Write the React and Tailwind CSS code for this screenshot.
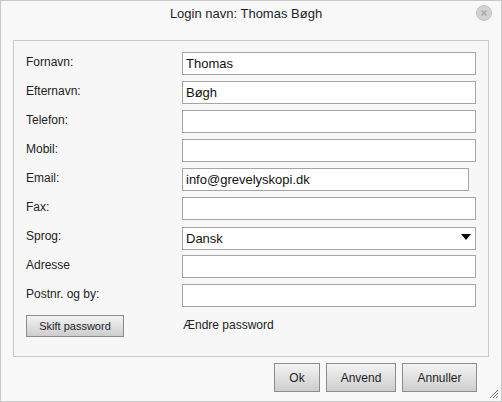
import { useState } from 'react';

const FIELDS = [
  { label: 'Fornavn:', value: 'Thomas' },
  { label: 'Efternavn:', value: 'Bøgh' },
  { label: 'Telefon:', value: '' },
  { label: 'Mobil:', value: '' },
  { label: 'Email:', value: 'info@grevelyskopi.dk', narrow: true },
  { label: 'Fax:', value: '' },
  { label: 'Sprog:', select: true, value: 'Dansk' },
  { label: 'Adresse', value: '' },
  { label: 'Postnr. og by:', value: '' },
];

function CloseIcon() {
  return (
    <svg width="16" height="16" viewBox="0 0 16 16">
      <circle cx="8" cy="8" r="7.5" fill="#d2d2d2" stroke="#c4c4c4" />
      <path d="M5.5 5.5 L10.5 10.5 M10.5 5.5 L5.5 10.5" stroke="#a8a8a8" strokeWidth="1.6" />
    </svg>
  );
}

function Grip() {
  return (
    <svg width="12" height="12" viewBox="0 0 12 12">
      <path d="M11 3 L3 11 M11 6 L6 11 M11 9 L9 11" stroke="#6f6f6f" strokeWidth="1" />
    </svg>
  );
}

function Field({ field }) {
  const [value, setValue] = useState(field.value);

  if (field.select) {
    return (
      <div className="relative flex-1 h-[23px]">
        <select
          value={value}
          onChange={(e) => setValue(e.target.value)}
          className="appearance-none w-full h-full bg-white border border-[#a5a5a5] px-[3px] text-[13px] text-[#111] outline-none"
        >
          <option>Dansk</option>
          <option>English</option>
        </select>
        <svg className="absolute right-[5px] top-[8px] pointer-events-none" width="10" height="6" viewBox="0 0 10 6">
          <path d="M0 0 H10 L5 6 Z" fill="#000" />
        </svg>
      </div>
    );
  }

  return (
    <input
      type="text"
      value={value}
      onChange={(e) => setValue(e.target.value)}
      className={`h-[23px] bg-white border border-[#a5a5a5] px-[3px] text-[13px] text-[#111] outline-none ${
        field.narrow ? 'w-[287px]' : 'flex-1'
      }`}
    />
  );
}

export default function App() {
  return (
    <div
      className="relative w-[502px] h-[402px] bg-[#f8f8f8] border border-[#c8c8c8] flex flex-col text-[#222]"
      style={{ fontFamily: '"Liberation Sans", Arial, sans-serif' }}
    >
      {/* TITLE */}
      <div className="h-[39px] flex items-start">
        <div className="flex-1 pt-[5px] pl-[18px] text-center text-[13px] leading-[16px] text-[#1e1e2c]">
          Login navn: Thomas Bøgh
        </div>
        <div className="w-[28px] pt-[4px] pl-[3px]">
          <CloseIcon />
        </div>
      </div>

      {/* FORM */}
      <div className="mx-[12px] h-[317px] border border-[#c9c9c9] bg-[#f7f7f7] pt-[11px] px-[12px] flex flex-col gap-[6px]">
        {FIELDS.map((field) => (
          <div key={field.label} className="flex h-[23px]">
            <div className="w-[156px] pt-[3px] text-[12px] leading-[14px]">
              {field.label}
            </div>
            <Field field={field} />
          </div>
        ))}

        <div className="flex items-center h-[22px] mt-[1px]">
          <div className="w-[156px]">
            <button className="w-[98px] h-[22px] border border-[#8c8c8c] bg-gradient-to-b from-[#f4f4f4] to-[#cdcdcd] text-[11px] text-[#1e1e2c]">
              Skift password
            </button>
          </div>
          <span className="text-[12px] pl-[1px] text-[#222]">Ændre password</span>
        </div>
      </div>

      {/* BUTTONS */}
      <div className="flex justify-end gap-[6px] pt-[6px] pr-[24px]">
        <button className="w-[46px] h-[29px] border border-[#8c8c8c] bg-gradient-to-b from-[#f4f4f4] to-[#cdcdcd] text-[12px] text-[#1e1e2c]">
          Ok
        </button>
        <button className="w-[70px] h-[29px] border border-[#8c8c8c] bg-gradient-to-b from-[#f4f4f4] to-[#cdcdcd] text-[12px] text-[#1e1e2c]">
          Anvend
        </button>
        <button className="w-[75px] h-[29px] border border-[#8c8c8c] bg-gradient-to-b from-[#f4f4f4] to-[#cdcdcd] text-[12px] text-[#1e1e2c]">
          Annuller
        </button>
      </div>

      <div className="absolute right-[2px] bottom-[2px]">
        <Grip />
      </div>
    </div>
  );
}
